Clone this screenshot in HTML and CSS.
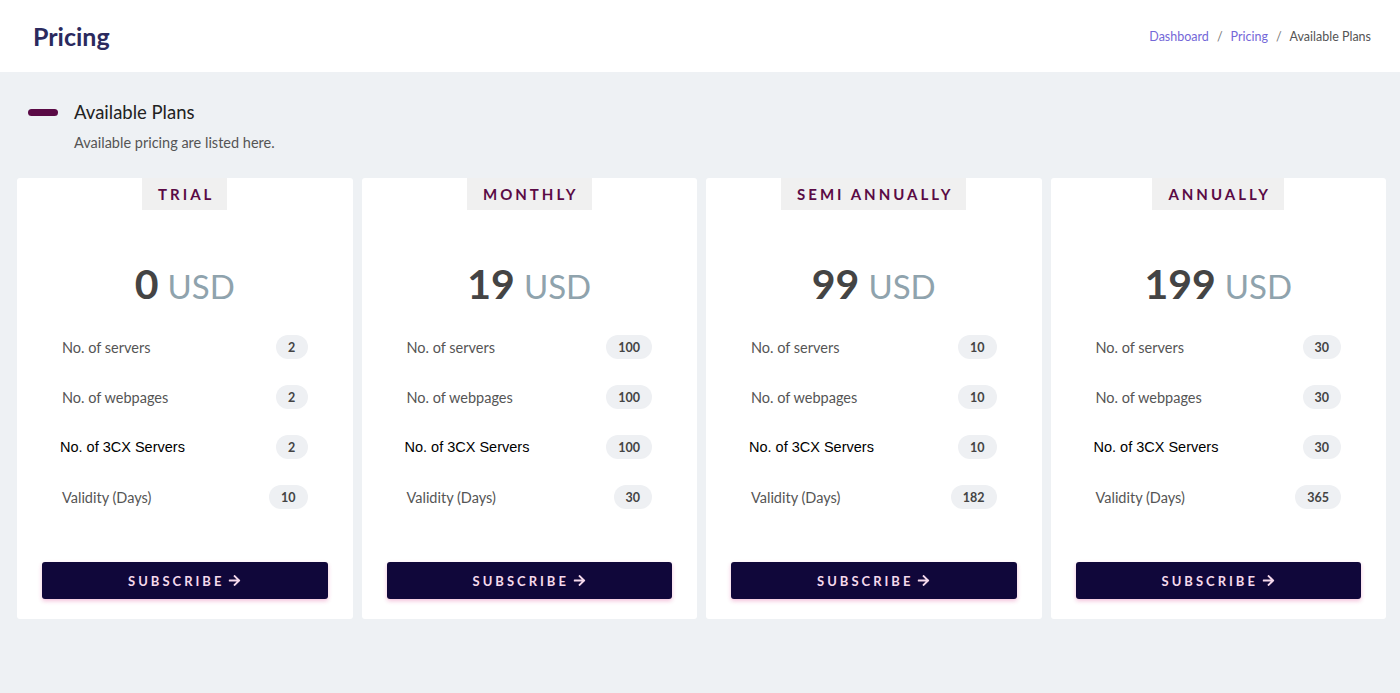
FILE: index.html
```html
<!DOCTYPE html>
<html lang="en">
<head>
  <meta charset="UTF-8" />
  <meta name="viewport" content="width=device-width, initial-scale=1.0"/>
  <title>Pricing</title>
  <link rel="stylesheet" href="styles.css">
</head>
<body>
<header class="topbar">
  <h1>Pricing</h1>
  <nav class="crumbs">
    <a href="#">Dashboard</a>
    <span class="sep">/</span>
    <a href="#">Pricing</a>
    <span class="sep">/</span>
    <span class="current">Available Plans</span>
  </nav>
</header>

<main class="content">
  <div class="section-head">
    <div class="title-row">
      <span class="bar"></span>
      <h2>Available Plans</h2>
    </div>
    <p class="sub">Available pricing are listed here.</p>
  </div>

  <div class="plans">
    <div class="plan">
      <div class="tag">TRIAL</div>
      <div class="price"><b>0</b> <span>USD</span></div>
      <ul class="features">
        <li><span>No. of servers</span><em>2</em></li>
        <li><span>No. of webpages</span><em>2</em></li>
        <li class="plain"><span>No. of 3CX Servers</span><em>2</em></li>
        <li><span>Validity (Days)</span><em>10</em></li>
      </ul>
      <button class="subscribe">SUBSCRIBE <svg viewBox="0 0 448 512" width="13" height="13"><path fill="currentColor" d="M190.5 66.9l22.2-22.2c9.4-9.4 24.6-9.4 33.9 0L441 239c9.4 9.4 9.4 24.6 0 33.9L246.6 467.3c-9.4 9.4-24.6 9.4-33.9 0l-22.2-22.2c-9.5-9.5-9.3-25 .4-34.3L311.4 296H24c-13.3 0-24-10.7-24-24v-32c0-13.3 10.7-24 24-24h287.4L190.9 101.2c-9.8-9.3-10-24.8-.4-34.3z"/></svg></button>
    </div>

    <div class="plan">
      <div class="tag">MONTHLY</div>
      <div class="price"><b>19</b> <span>USD</span></div>
      <ul class="features">
        <li><span>No. of servers</span><em>100</em></li>
        <li><span>No. of webpages</span><em>100</em></li>
        <li class="plain"><span>No. of 3CX Servers</span><em>100</em></li>
        <li><span>Validity (Days)</span><em>30</em></li>
      </ul>
      <button class="subscribe">SUBSCRIBE <svg viewBox="0 0 448 512" width="13" height="13"><path fill="currentColor" d="M190.5 66.9l22.2-22.2c9.4-9.4 24.6-9.4 33.9 0L441 239c9.4 9.4 9.4 24.6 0 33.9L246.6 467.3c-9.4 9.4-24.6 9.4-33.9 0l-22.2-22.2c-9.5-9.5-9.3-25 .4-34.3L311.4 296H24c-13.3 0-24-10.7-24-24v-32c0-13.3 10.7-24 24-24h287.4L190.9 101.2c-9.8-9.3-10-24.8-.4-34.3z"/></svg></button>
    </div>

    <div class="plan">
      <div class="tag">SEMI ANNUALLY</div>
      <div class="price"><b>99</b> <span>USD</span></div>
      <ul class="features">
        <li><span>No. of servers</span><em>10</em></li>
        <li><span>No. of webpages</span><em>10</em></li>
        <li class="plain"><span>No. of 3CX Servers</span><em>10</em></li>
        <li><span>Validity (Days)</span><em>182</em></li>
      </ul>
      <button class="subscribe">SUBSCRIBE <svg viewBox="0 0 448 512" width="13" height="13"><path fill="currentColor" d="M190.5 66.9l22.2-22.2c9.4-9.4 24.6-9.4 33.9 0L441 239c9.4 9.4 9.4 24.6 0 33.9L246.6 467.3c-9.4 9.4-24.6 9.4-33.9 0l-22.2-22.2c-9.5-9.5-9.3-25 .4-34.3L311.4 296H24c-13.3 0-24-10.7-24-24v-32c0-13.3 10.7-24 24-24h287.4L190.9 101.2c-9.8-9.3-10-24.8-.4-34.3z"/></svg></button>
    </div>

    <div class="plan">
      <div class="tag">ANNUALLY</div>
      <div class="price"><b>199</b> <span>USD</span></div>
      <ul class="features">
        <li><span>No. of servers</span><em>30</em></li>
        <li><span>No. of webpages</span><em>30</em></li>
        <li class="plain"><span>No. of 3CX Servers</span><em>30</em></li>
        <li><span>Validity (Days)</span><em>365</em></li>
      </ul>
      <button class="subscribe">SUBSCRIBE <svg viewBox="0 0 448 512" width="13" height="13"><path fill="currentColor" d="M190.5 66.9l22.2-22.2c9.4-9.4 24.6-9.4 33.9 0L441 239c9.4 9.4 9.4 24.6 0 33.9L246.6 467.3c-9.4 9.4-24.6 9.4-33.9 0l-22.2-22.2c-9.5-9.5-9.3-25 .4-34.3L311.4 296H24c-13.3 0-24-10.7-24-24v-32c0-13.3 10.7-24 24-24h287.4L190.9 101.2c-9.8-9.3-10-24.8-.4-34.3z"/></svg></button>
    </div>
  </div>
</main>
</body>
</html>
```

FILE: styles.css
```css
body {
  font-family: Lato, 'Noto Sans', sans-serif;
  background: #eef1f4;
  color: #555;
  margin: 0;
  padding: 0;
}
.topbar {
  background: #fff;
  height: 72px;
  display: flex;
  align-items: center;
  justify-content: space-between;
  padding: 0 29px 0 33px;
}
.topbar h1 {
  margin: 0;
  font-size: 25px;
  font-weight: 700;
  color: #2b2a5e;
}
.crumbs {
  font-size: 12.5px;
  display: flex;
  gap: 8px;
}
.crumbs a {
  color: #7468d8;
  text-decoration: none;
}
.crumbs .sep {
  color: #777;
}
.crumbs .current {
  color: #555;
}
.content {
  padding: 0 14px 0 17px;
}
.section-head {
  padding: 29px 0 27px 11px;
}
.title-row {
  display: flex;
  align-items: center;
  gap: 16px;
}
.bar {
  width: 30px;
  height: 7px;
  border-radius: 4px;
  background: #5a0a45;
}
.title-row h2 {
  margin: 0;
  font-size: 18.5px;
  font-weight: 400;
  color: #222;
}
.sub {
  margin: 11px 0 0 46px;
  font-size: 14.5px;
  color: #555;
}
.plans {
  display: grid;
  grid-template-columns: repeat(4, 1fr);
  gap: 9px;
}
.plan {
  background: #fff;
  border-radius: 3px;
  height: 441px;
  display: flex;
  flex-direction: column;
  align-items: center;
  padding: 0 25px 20px;
  box-sizing: border-box;
}
.tag {
  background: #f0f0f0;
  color: #5a0a45;
  font-size: 15px;
  font-weight: 700;
  letter-spacing: 3px;
  height: 32px;
  line-height: 32px;
  padding: 0 13px 0 16px;
}
.price {
  margin-top: 54px;
  height: 40px;
  line-height: 40px;
}
.price b {
  font-size: 41px;
  font-weight: 700;
  color: #444;
}
.price span {
  font-size: 33px;
  color: #8fa3ad;
  margin-left: 5px;
}
.features {
  list-style: none;
  margin: 18px 0 0;
  padding: 0 20px;
  align-self: stretch;
}
.features li {
  display: flex;
  justify-content: space-between;
  align-items: center;
  height: 50px;
  font-size: 14.5px;
  color: #555;
}
.features li.plain span {
  font-family: 'Liberation Sans', Arial, sans-serif;
  font-size: 14.5px;
  color: #000;
  margin-left: -2px;
}
.features em {
  font-style: normal;
  font-size: 12.5px;
  font-weight: 700;
  color: #444;
  background: #eef0f3;
  border-radius: 12px;
  min-width: 32px;
  height: 24px;
  line-height: 25px;
  text-align: center;
  padding: 0 12px;
  box-sizing: border-box;
}
.subscribe {
  margin-top: auto;
  align-self: stretch;
  height: 37px;
  border: none;
  border-radius: 3px;
  background: #10073a;
  color: #f5d9ec;
  font-family: inherit;
  font-size: 13px;
  font-weight: 700;
  letter-spacing: 3px;
  box-shadow: 0 2px 4px rgba(214, 51, 132, 0.3);
  cursor: pointer;
  display: flex;
  align-items: center;
  justify-content: center;
  gap: 4px;
}
.subscribe svg {
  margin-top: -1px;
}
```
